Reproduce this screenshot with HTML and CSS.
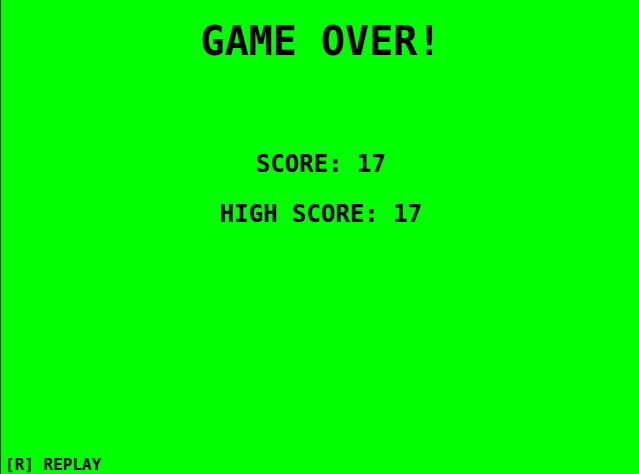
FILE: index.html
```html
<!DOCTYPE html>
<html lang="en">
<head>
<meta charset="utf-8">
<meta name="viewport" content="width=device-width, initial-scale=1">
<title>Game Over</title>
<link rel="stylesheet" href="styles.css">
</head>
<body>
<main class="screen">
  <h1 class="title">GAME OVER!</h1>
  <div class="scores">
    <p class="score">SCORE: 17</p>
    <p class="score">HIGH SCORE: 17</p>
  </div>
  <button class="replay" type="button">[R] REPLAY</button>
</main>
</body>
</html>
```

FILE: styles.css
```css
* {
  box-sizing: border-box;
}

body {
  margin: 0;
}

.screen {
  display: flex;
  flex-direction: column;
  min-height: 100vh;
  padding: 20px 0 0 2px;
  border-left: 1px solid #003c00;
  background: #00ff00;
  color: #000;
  font-family: "DejaVu Sans Mono", monospace;
  font-weight: bold;
  text-align: center;
}

.title {
  margin: 0;
  font-size: 40px;
  line-height: 42px;
}

.scores {
  display: flex;
  flex-direction: column;
  gap: 20px;
  margin-top: 87px;
}

.score {
  margin: 0;
  font-size: 24px;
  line-height: 30px;
}

.replay {
  align-self: flex-start;
  margin-top: auto;
  padding: 0 2px;
  border: 0;
  background: none;
  color: inherit;
  font: inherit;
  font-size: 16px;
  line-height: 18px;
  cursor: pointer;
}
```
